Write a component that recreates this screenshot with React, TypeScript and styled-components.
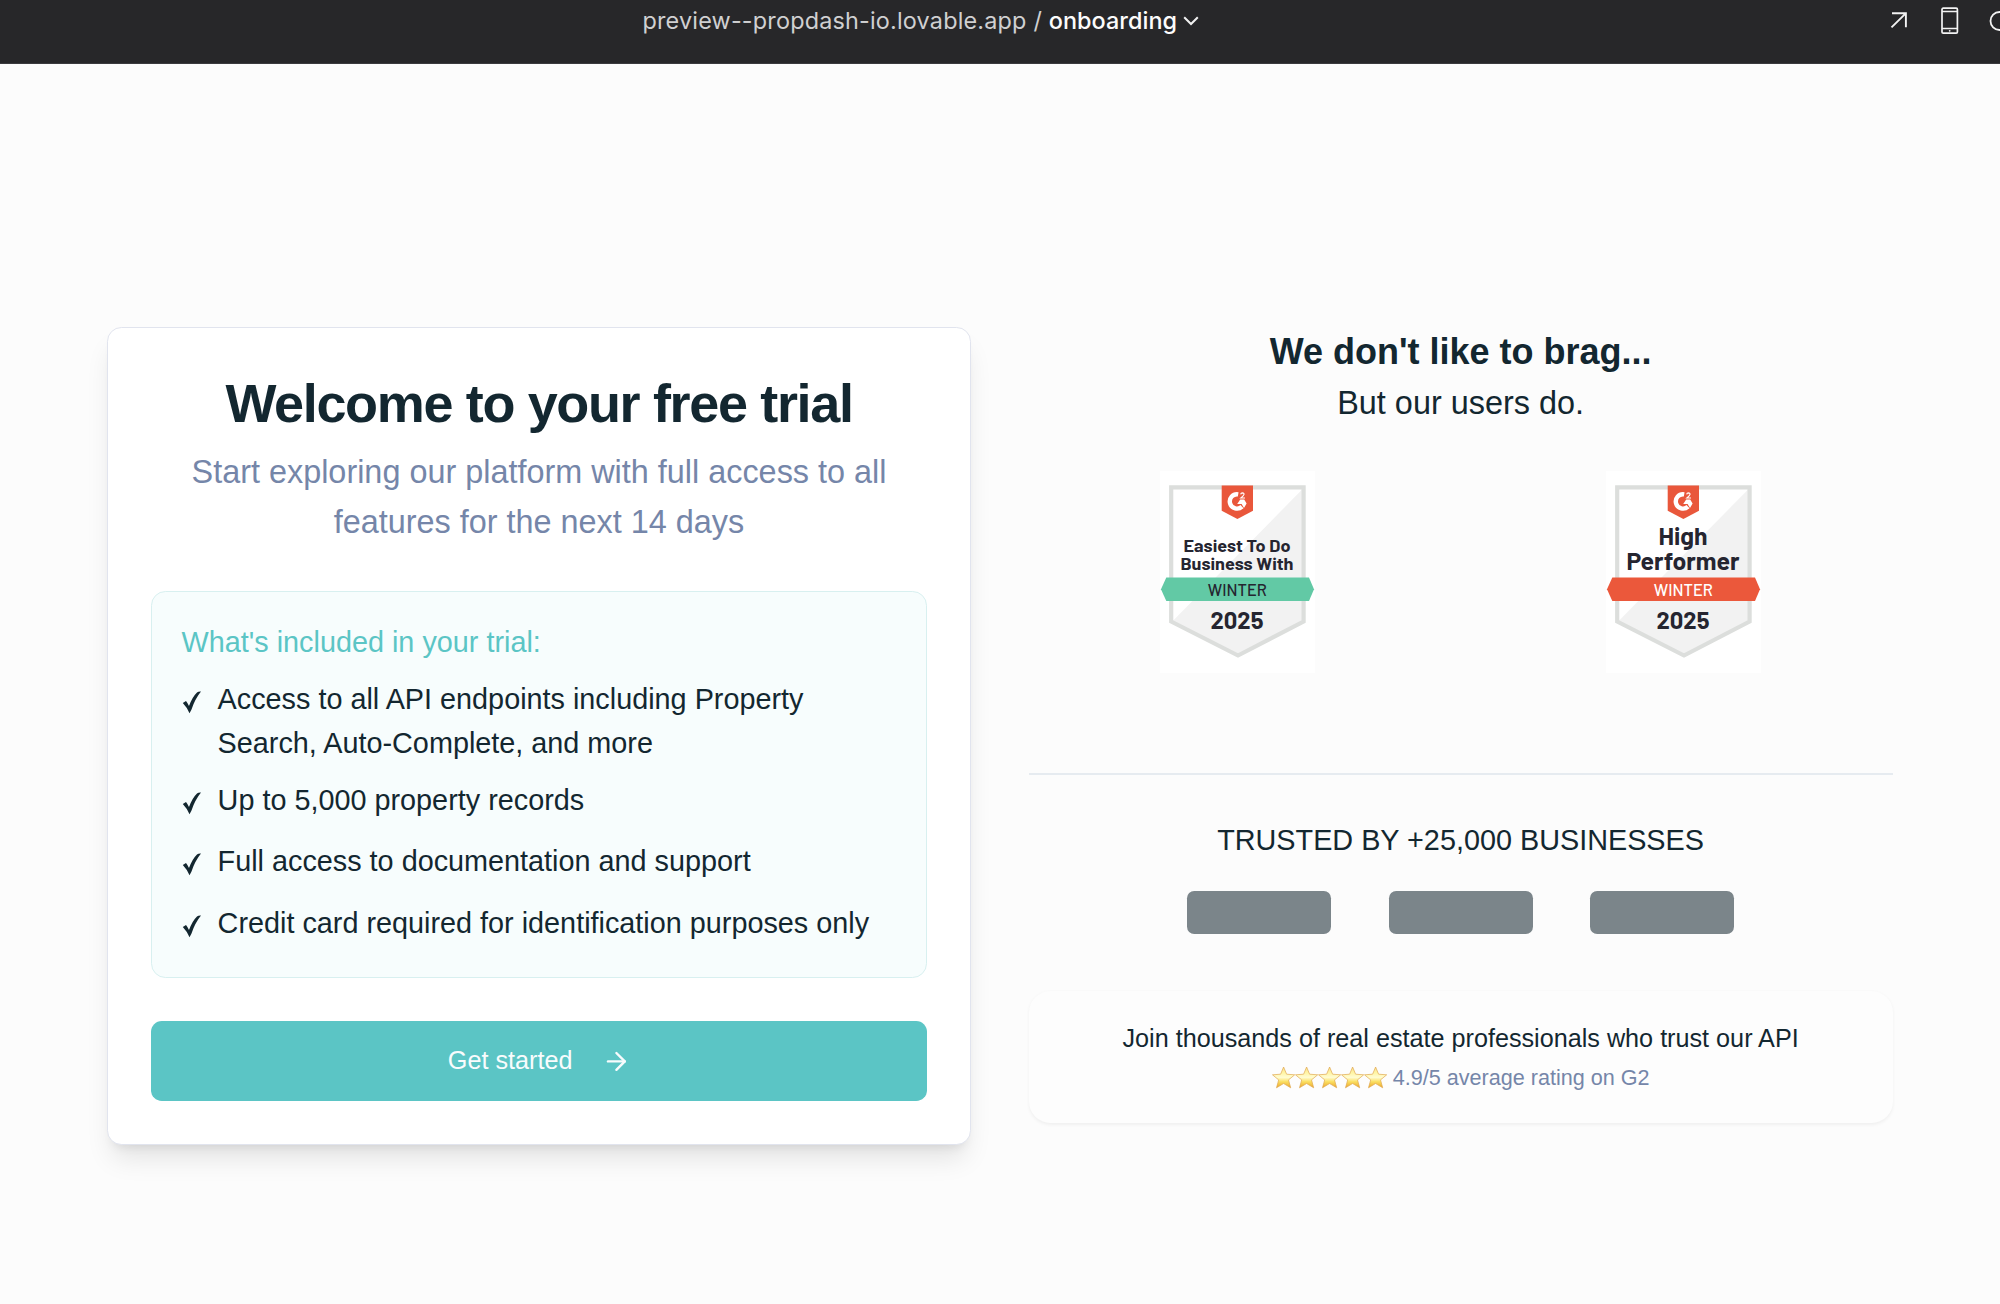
import React from 'react';
import styled, { createGlobalStyle } from 'styled-components';
import { ArrowRight } from 'lucide-react';

const sans = "'Liberation Sans', Helvetica, Arial, sans-serif";
const ink = '#132730';
const muted = '#7586a9';
const teal = '#5bc5c5';

const GlobalStyle = createGlobalStyle`
  *, *::before, *::after { box-sizing: border-box; }
  body { margin: 0; background: #fcfcfc; color: ${ink}; font-family: ${sans}; overflow: hidden; }
  h1, h2, p, ul { margin: 0; padding: 0; font-weight: 400; }
`;

const Page = styled.div`
  width: 2000px;
  height: 1304px;
  overflow: hidden;
  display: flex;
  flex-direction: column;
`;

const TopBar = styled.header`
  height: 64px;
  flex: none;
  background: #272729;
  border-bottom: 1px solid #3b3b3e;
  display: grid;
  grid-template-columns: 642.5px 1fr auto;
  align-items: start;
  overflow: hidden;
`;

const Address = styled.div`
  grid-column: 2;
  display: flex;
  align-items: center;
  height: 42px;
  font: 400 23.4px/42px Inter, sans-serif;
  letter-spacing: 0.19px;
  color: #d0d0d1;
  white-space: pre;
  svg { margin-left: 6px; }
`;

const Route = styled.span`
  color: #fcfcfc;
  font-weight: 500;
  letter-spacing: 0.05px;
`;

const Tools = styled.div`
  display: flex;
  width: 112px;
  height: 41px;
  align-items: center;
  svg { flex: none; }
`;

const ToolSlot = styled.span<{ $w: number }>`
  display: flex;
  flex: none;
  width: ${p => p.$w}px;
`;

const Main = styled.main`
  display: grid;
  grid-template-columns: 864px 864px;
  column-gap: 57.6px;
  align-items: start;
  padding: 263px 107px 0;
`;

const TrialCard = styled.section`
  height: 818px;
  padding: 43px 43px 0;
  background: #fff;
  border: 1px solid #e1e4ee;
  border-radius: 14.4px;
  box-shadow: 0 18px 27px -5.4px rgba(0, 0, 0, 0.1), 0 7.2px 10.8px -7.2px rgba(0, 0, 0, 0.1);
`;

const Title = styled.h1`
  font-size: 54px;
  font-weight: 700;
  line-height: 64px;
  letter-spacing: -1.35px;
  text-align: center;
  white-space: nowrap;
`;

const Subtitle = styled.p`
  margin-top: 12px;
  font-size: 32.4px;
  line-height: 50.4px;
  color: ${muted};
  text-align: center;
`;

const Included = styled.div`
  height: 387px;
  margin-top: 43px;
  padding: 29px 30px 0 29.6px;
  background: #f7fdfd;
  border: 1px solid #d8f0f0;
  border-radius: 14.4px;
`;

const IncludedTitle = styled.p`
  font-size: 28.8px;
  line-height: 43.2px;
  color: ${teal};
`;

const Features = styled.ul`
  list-style: none;
  display: flex;
  flex-direction: column;
  gap: 18px;
  margin-top: 14px;
`;

const Feature = styled.li<{ $lines?: number }>`
  display: grid;
  grid-template-columns: 36px 1fr;
  height: ${p => (p.$lines === 2 ? 83 : 43.4)}px;
  font-size: 28.8px;
  line-height: 43.6px;
  white-space: pre-line;
  svg { margin-top: 13px; }
`;

const StartButton = styled.button`
  display: flex;
  align-items: center;
  justify-content: center;
  gap: 30px;
  width: 100%;
  height: 80px;
  margin-top: 43px;
  padding: 0 0 1px 1px;
  border: 0;
  border-radius: 10.8px;
  background: ${teal};
  color: #f8fcfd;
  font: 400 25.2px/36px ${sans};
  svg { margin-top: 2px; }
`;

const Proof = styled.section`
  display: flex;
  flex-direction: column;
`;

const BragTitle = styled.h2`
  font-size: 36px;
  font-weight: 700;
  line-height: 50px;
  text-align: center;
`;

const BragText = styled.p`
  margin-top: 1px;
  font-size: 32.4px;
  line-height: 50px;
  text-align: center;
`;

const Badges = styled.div`
  display: grid;
  grid-template-columns: 1fr 1fr;
  gap: 28px;
  height: 304px;
  margin-top: 43px;
  justify-items: center;
  border-bottom: 2px solid #e6ebf0;
`;

const BadgeSvg = styled.svg`
  display: block;
  width: 155px;
  height: 202px;
  background: #fff;
  font-family: 'Barlow', 'DIN', Roboto, sans-serif;
`;

const Trusted = styled.p`
  margin-top: 43px;
  font-size: 28.8px;
  line-height: 44px;
  text-align: center;
`;

const Logos = styled.div`
  display: flex;
  justify-content: center;
  gap: 57.6px;
  margin-top: 29px;
`;

const LogoBlock = styled.div`
  width: 144px;
  height: 43px;
  border-radius: 7.2px;
  background: #7b858a;
`;

const RatingCard = styled.div`
  height: 132px;
  margin-top: 57px;
  padding-top: 29px;
  border-radius: 21.6px;
  background: #fdfdfd;
  box-shadow: 0 1.8px 3.6px rgba(0, 0, 0, 0.05);
`;

const JoinText = styled.p`
  font-size: 25.2px;
  line-height: 36px;
  text-align: center;
`;

const Rating = styled.p`
  display: flex;
  align-items: center;
  justify-content: center;
  gap: 5px;
  margin-top: 8px;
  font-size: 21.6px;
  line-height: 28.8px;
  color: ${muted};
`;

const Stars = styled.svg`
  display: block;
`;

const Check = () => (
  <svg width="20" height="23" viewBox="0 0 20 23" fill={ink}>
    <path d="M.8 11.9 4 9.9Q5.6 11.8 7 15 10.2 6 15 1.4 16.2.4 19 .5 13 7.8 9.4 18.7L7.5 22.3Q4.8 15.9 .8 11.9Z" />
  </svg>
);

type BadgeProps = { lines: string[]; sizes: number; baselines: number[]; widths: number[]; color: string; label: string };

const Badge = ({ lines, sizes, baselines, widths, color, label }: BadgeProps) => (
  <BadgeSvg viewBox="0 0 155 202">
    <path d="M11.2 16.4H143.6V150.5L78 184.5 11.2 150.5Z" fill="#fff" />
    <path d="M143.6 17V150.5L78 184.5 12 150.8Z" fill="#f2f2f2" />
    <path d="M11.2 16.4H143.6V150.5L78 184.5 11.2 150.5Z" fill="none" stroke="#dcdedc" strokeWidth="4.2" />
    <path d="M61.7 14.5H93V39.8L77.4 48 61.7 39.8Z" fill="#e9573b" />
    <path d="M78.2 23.3A7.2 7.2 0 1 0 82 35.6" fill="none" stroke="#fff" strokeWidth="4.4" />
    <path d="M80.2 28.5H84.2L86.6 32.6 84 37 81.6 32.9H77.2Z" fill="#fff" />
    <path d="M80.7 23.4Q80.9 21.9 82.5 21.9 84.2 22 84 23.4 83.6 24.7 80.9 27H85" fill="none" stroke="#fff" strokeWidth="1.2" />
    <path d="M6.3 106.5H149L154 118.2 149 130H6.3L1 118.2Z" fill={color} />
    <g fill="#252530" textAnchor="middle" fontWeight="700">
      {lines.map((line, i) => (
        <text key={line} x="77" y={baselines[i]} fontSize={sizes} textLength={widths[i]} lengthAdjust="spacingAndGlyphs">{line}</text>
      ))}
      <text x="77" y="157.7" fontSize="24" textLength="53" lengthAdjust="spacingAndGlyphs">2025</text>
      <text x="77.3" y="125" fontSize="16.5" fontWeight="500" fill={label} textLength="59" lengthAdjust="spacingAndGlyphs">WINTER</text>
    </g>
  </BadgeSvg>
);

const StarRow = () => (
  <Stars width="116" height="24" viewBox="0 0 116 24">
    <defs>
      <linearGradient id="gold" x1="0" y1="0" x2="0" y2="1">
        <stop offset="0" stopColor="#fbe08a" />
        <stop offset="0.3" stopColor="#fff6a8" />
        <stop offset="0.5" stopColor="#fffcd2" />
        <stop offset="0.7" stopColor="#fbe063" />
        <stop offset="1" stopColor="#eba52a" />
      </linearGradient>
    </defs>
    {[0, 1, 2, 3, 4].map(i => (
      <path
        key={i}
        transform={`translate(${i * 23} 0)`}
        d="M11.6 1 14.6 8.2 22.7 8.8 16.5 13.9 18.7 21.8 11.6 17.5 4.5 21.8 6.7 13.9 .5 8.8 8.6 8.2Z"
        fill="url(#gold)"
        stroke="#dfa850"
        strokeWidth="0.7"
        strokeLinejoin="round"
      />
    ))}
  </Stars>
);

export default function App() {
  return (
    <Page>
      <GlobalStyle />
      <TopBar>
        <Address>
          {'preview--propdash-io.lovable.app / '}
          <Route>onboarding</Route>
          <svg width="16" height="10" viewBox="0 0 16 10" fill="none" stroke="#f0f0f0" strokeWidth="2">
            <path d="M1.2 1.3 8 8 14.8 1.3" />
          </svg>
        </Address>
        <Tools>
          <ToolSlot $w={53}>
            <svg width="20" height="22" viewBox="0 0 20 22" fill="none" stroke="#f3f3f3" strokeWidth="1.9">
              <path d="M4 3.2H17.9V17.2M17.5 3.6 3.5 17.4" />
            </svg>
          </ToolSlot>
          <ToolSlot $w={48}>
            <svg width="18" height="28" viewBox="0 0 18 28" fill="none" stroke="#f3f3f3" strokeWidth="1.7">
              <rect x="1" y="1.2" width="15.4" height="25" rx="1.2" />
              <path d="M1 4.5H16.4M1 21.5H16.4" />
              <circle cx="8.7" cy="23.8" r="0.9" fill="#f3f3f3" stroke="none" />
            </svg>
          </ToolSlot>
          <svg width="22" height="22" viewBox="0 0 22 22" fill="none" stroke="#f3f3f3" strokeWidth="1.8">
            <circle cx="10.5" cy="11" r="9" />
          </svg>
        </Tools>
      </TopBar>
      <Main>
        <TrialCard>
          <Title>Welcome to your free trial</Title>
          <Subtitle>
            Start exploring our platform with full access to all
            <br />
            features for the next 14 days
          </Subtitle>
          <Included>
            <IncludedTitle>What's included in your trial:</IncludedTitle>
            <Features>
              <Feature $lines={2}>
                <Check />
                <span>{'Access to all API endpoints including Property\nSearch, Auto-Complete, and more'}</span>
              </Feature>
              <Feature><Check /><span>Up to 5,000 property records</span></Feature>
              <Feature><Check /><span>Full access to documentation and support</span></Feature>
              <Feature><Check /><span>Credit card required for identification purposes only</span></Feature>
            </Features>
          </Included>
          <StartButton>
            Get started
            <ArrowRight size={28.8} strokeWidth={2} />
          </StartButton>
        </TrialCard>
        <Proof>
          <BragTitle>We don't like to brag...</BragTitle>
          <BragText>But our users do.</BragText>
          <Badges>
            <Badge lines={['Easiest To Do', 'Business With']} sizes={17.5} baselines={[81.3, 99.3]} widths={[107, 113]} color="#62c9a5" label="#252530" />
            <Badge lines={['High', 'Performer']} sizes={24} baselines={[74, 99]} widths={[49, 113]} color="#eb583b" label="#fff" />
          </Badges>
          <Trusted>TRUSTED BY +25,000 BUSINESSES</Trusted>
          <Logos>
            <LogoBlock />
            <LogoBlock />
            <LogoBlock />
          </Logos>
          <RatingCard>
            <JoinText>Join thousands of real estate professionals who trust our API</JoinText>
            <Rating>
              <StarRow />
              4.9/5 average rating on G2
            </Rating>
          </RatingCard>
        </Proof>
      </Main>
    </Page>
  );
}
